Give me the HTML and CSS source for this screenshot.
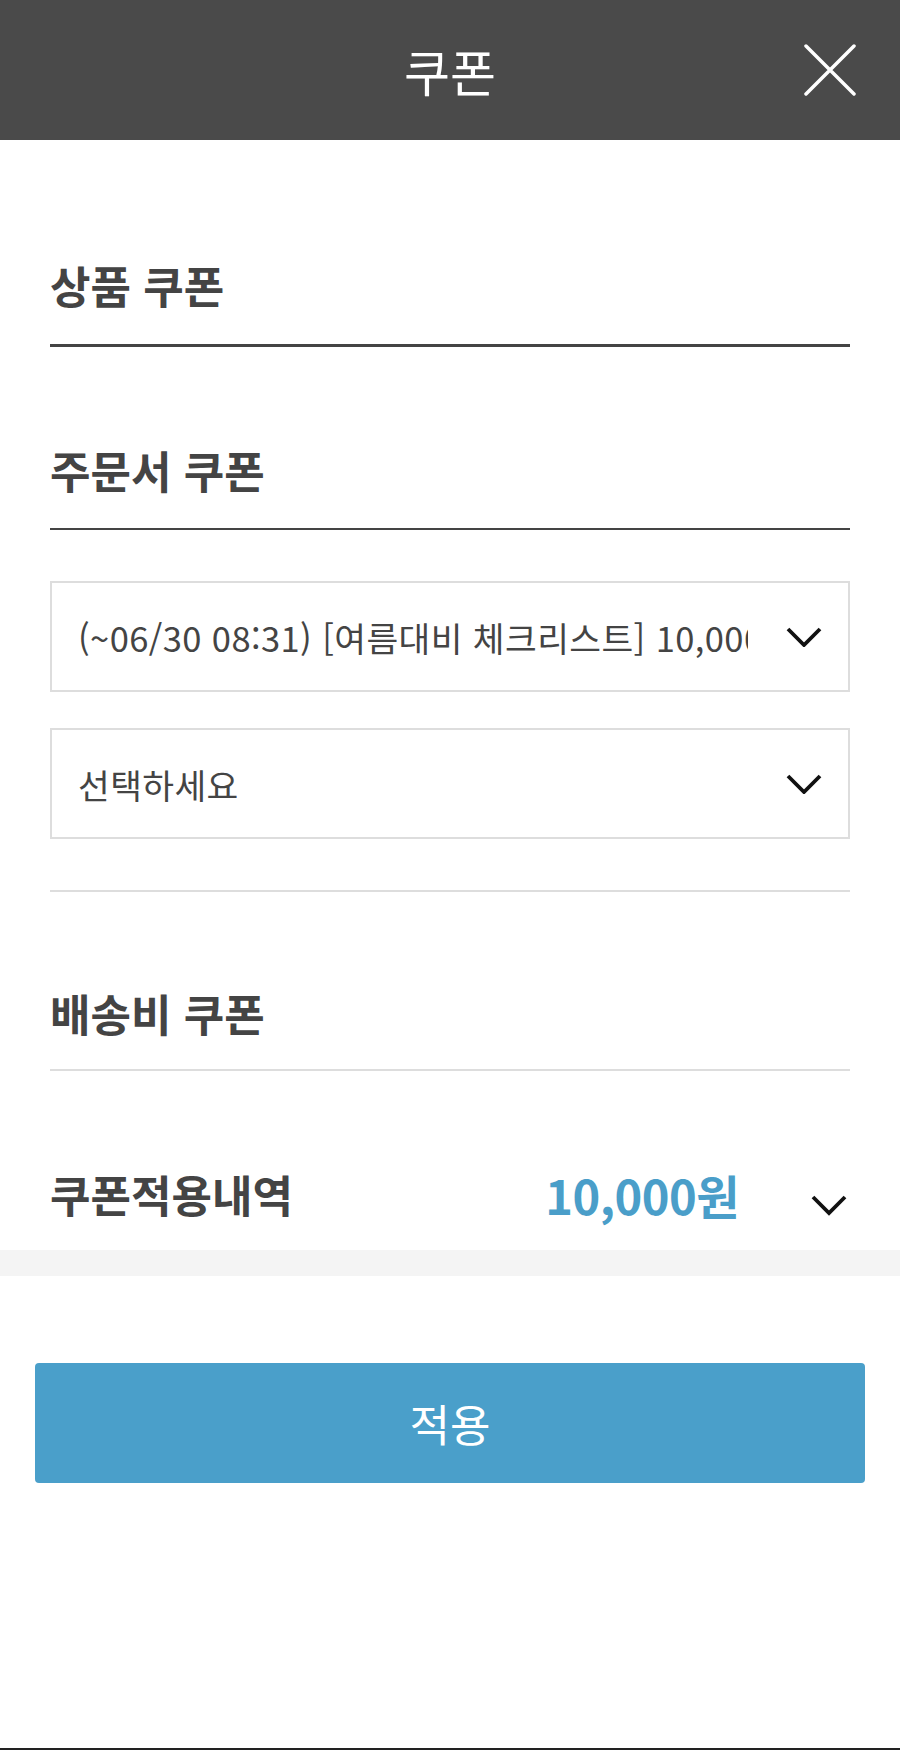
FILE: index.html
```html
<!DOCTYPE html>
<html lang="ko">
<head>
    <meta charset="UTF-8">
    <meta name="viewport" content="width=device-width, initial-scale=1.0">
    <title>쿠폰</title>
    <link rel="stylesheet" href="styles.css">
</head>
<body>
    <div class="page">
        <header class="top-bar">
            <span></span>
            <h1 class="top-title">쿠폰</h1>
            <button class="close-btn" aria-label="닫기">
                <svg width="52" height="52" viewBox="0 0 52 52">
                    <path d="M2 2 L50 50 M50 2 L2 50" stroke="#fff" stroke-width="3.5" stroke-linecap="round" fill="none"/>
                </svg>
            </button>
        </header>

        <div class="content">
            <h2 class="coupon-head head-product">상품 쿠폰</h2>

            <h2 class="coupon-head head-order">주문서 쿠폰</h2>
            <div class="select-list">
                <div class="select-box">
                    <span class="select-text">(~06/30 08:31) [여름대비 체크리스트] 10,000원 할인</span>
                    <svg class="chevron" width="36" height="20" viewBox="0 0 36 20">
                        <path d="M2 2 L18 18 L34 2" stroke="#111" stroke-width="3.8" fill="none" stroke-linejoin="miter"/>
                    </svg>
                </div>
                <div class="select-box">
                    <span class="select-text">선택하세요</span>
                    <svg class="chevron" width="36" height="20" viewBox="0 0 36 20">
                        <path d="M2 2 L18 18 L34 2" stroke="#111" stroke-width="3.8" fill="none" stroke-linejoin="miter"/>
                    </svg>
                </div>
            </div>

            <h2 class="coupon-head head-delivery">배송비 쿠폰</h2>

            <div class="summary">
                <h2 class="summary-label">쿠폰적용내역</h2>
                <span class="summary-price">10,000원</span>
                <svg class="chevron summary-chevron" width="36" height="21" viewBox="0 0 36 21">
                    <path d="M2 2 L18 18 L34 2" stroke="#111" stroke-width="3.8" fill="none" stroke-linejoin="miter"/>
                </svg>
            </div>
        </div>

        <div class="gray-band"></div>

        <div class="actions">
            <button class="apply-btn">적용</button>
        </div>
    </div>
</body>
</html>
```

FILE: styles.css
```css
* {
    box-sizing: border-box;
    margin: 0;
    padding: 0;
}

body {
    font-family: "Noto Sans CJK KR", "Noto Sans", sans-serif;
    color: #444;
    background: #fff;
}

.page {
    width: 900px;
    height: 1750px;
    border-bottom: 2px solid #222;
    overflow: hidden;
}

/* header */
.top-bar {
    height: 140px;
    background-color: #4a4a4a;
    display: grid;
    grid-template-columns: 1fr auto 1fr;
    align-items: center;
    padding: 0 44px;
}

.top-title {
    color: #fff;
    font-size: 50px;
    font-weight: 400;
    line-height: 1;
}

.close-btn {
    justify-self: end;
    background: none;
    border: none;
    display: flex;
    cursor: pointer;
}

/* body */
.content {
    padding: 0 50px;
}

.coupon-head {
    font-size: 44px;
    font-weight: 700;
    line-height: 47px;
    color: #444;
}

.head-product {
    padding: 122px 0 35px 0;
    border-bottom: 3px solid #444;
}

.head-order {
    padding: 100px 0 34px 0;
    border-bottom: 2px solid #444;
}

.head-delivery {
    padding: 98px 0 32px 0;
    border-bottom: 2px solid #ddd;
}

.select-list {
    display: flex;
    flex-direction: column;
    gap: 36px;
    padding: 51px 0 51px 0;
    border-bottom: 2px solid #ddd;
}

.select-box {
    height: 111px;
    border: 2px solid #ddd;
    display: flex;
    align-items: center;
    padding: 0 26px 0 26px;
}

.select-text {
    flex: 1;
    margin-right: 38px;
    font-size: 34.5px;
    letter-spacing: 0.4px;
    color: #444;
    white-space: nowrap;
    overflow: hidden;
}

.summary {
    display: flex;
    align-items: center;
    padding: 100px 0 32px 0;
}

.summary-label {
    flex: 1;
    font-size: 44px;
    font-weight: 700;
    line-height: 47px;
}

.summary-price {
    font-size: 47px;
    font-weight: 700;
    line-height: 47px;
    color: #4a9ec9;
    letter-spacing: -0.5px;
}

.summary-chevron {
    margin-left: 72px;
    margin-right: 3px;
    margin-top: 22px;
}

.gray-band {
    height: 26px;
    background-color: #f4f4f4;
}

/* apply */
.actions {
    padding: 87px 35px 0 35px;
}

.apply-btn {
    width: 100%;
    height: 120px;
    border: none;
    border-radius: 4px;
    background-color: #4a9fca;
    color: #fff;
    font-family: inherit;
    font-size: 44px;
    font-weight: 400;
    cursor: pointer;
}
```
